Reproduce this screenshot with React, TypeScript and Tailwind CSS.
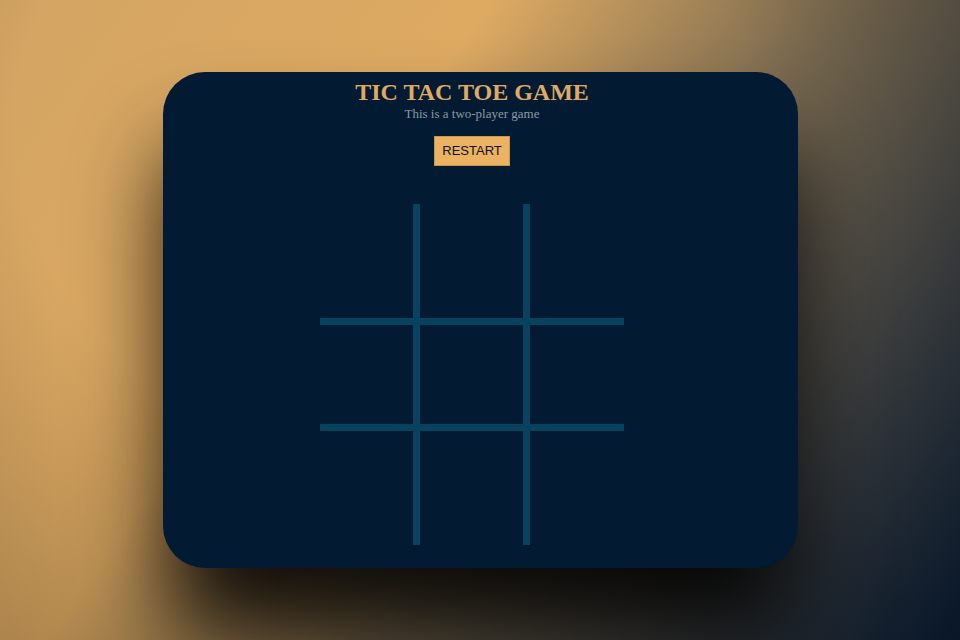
import React from 'react';

const cells = [
  'border-b-[7px]',
  'border-b-[7px] border-x-[7px]',
  'border-b-[7px]',
  'border-b-[7px]',
  'border-b-[7px] border-x-[7px]',
  'border-b-[7px]',
  '',
  'border-x-[7px]',
  '',
];

const App: React.FC = () => {
  return (
    <div className="relative w-full h-[640px] overflow-hidden bg-[linear-gradient(125deg,#d3a463_0%,#deaa62_35%,#7a6a50_60%,#0a1f3a_100%)]">
      <div className="absolute inset-0 bg-[radial-gradient(ellipse_at_40%_20%,rgba(0,0,0,0)_45%,rgba(0,0,0,0.3)_100%)]" />
      <div className="relative pt-[72px] flex justify-center">
        <div className="w-[635px] h-[496px] rounded-[42px] bg-[#021b33] shadow-[0_70px_90px_-5px_rgba(0,0,0,0.9)] pr-[16px] flex flex-col items-center">
          <h1 className="mt-[6px] text-[#e0aa62] font-bold text-[24px] leading-[28px] font-['Liberation_Serif',serif]">
            TIC TAC TOE GAME
          </h1>
          <p className="text-[#8c99a3] text-[13px] leading-[15px] font-['Liberation_Serif',serif]">
            This is a two-player game
          </p>
          <button className="mt-[15px] h-[30px] px-[7px] bg-[#eab262] text-[#111] text-[13px] font-['Liberation_Sans',sans-serif] border border-[#c8964f]">
            RESTART
          </button>
          <div className="mt-[38px] grid grid-cols-[93px_117px_94px] grid-rows-[121px_106px_114px]">
            {cells.map((c, i) => (
              <div key={i} className={`border-[#07425e] ${c}`} />
            ))}
          </div>
        </div>
      </div>
    </div>
  );
};

export default App;
